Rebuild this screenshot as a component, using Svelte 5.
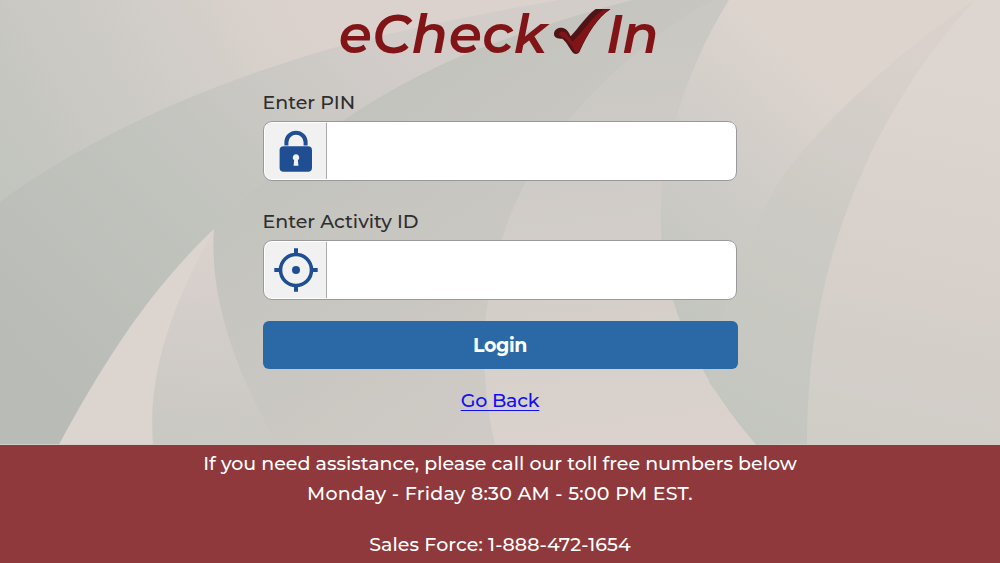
<script>
	let pin = '';
	let activityId = '';
</script>

<div class="page">
	<main class="login">
		<svg class="backdrop" viewBox="0 0 1000 445" preserveAspectRatio="none" aria-hidden="true">
			<defs>
				<linearGradient id="sky" gradientUnits="userSpaceOnUse" x1="0" y1="180" x2="300" y2="0">
					<stop offset="0" stop-color="#c2c4be" />
					<stop offset="0.6" stop-color="#d1cdc8" />
					<stop offset="1" stop-color="#dcd2cd" />
				</linearGradient>
				<linearGradient id="sweep" gradientUnits="userSpaceOnUse" x1="60" y1="400" x2="420" y2="50">
					<stop offset="0" stop-color="#b9bcb6" />
					<stop offset="0.45" stop-color="#c1c3bd" />
					<stop offset="1" stop-color="#d3cdca" />
				</linearGradient>
				<linearGradient id="inner" gradientUnits="userSpaceOnUse" x1="260" y1="150" x2="470" y2="440">
					<stop offset="0" stop-color="#c2c3bd" />
					<stop offset="1" stop-color="#cfcac5" />
				</linearGradient>
				<linearGradient id="petal" gradientUnits="userSpaceOnUse" x1="600" y1="50" x2="650" y2="440">
					<stop offset="0" stop-color="#cac8c3" />
					<stop offset="0.5" stop-color="#d2cdc8" />
					<stop offset="1" stop-color="#dbd2cd" />
				</linearGradient>
				<linearGradient id="leaf" gradientUnits="userSpaceOnUse" x1="670" y1="310" x2="850" y2="100">
					<stop offset="0" stop-color="#c3c5bf" />
					<stop offset="0.6" stop-color="#d1cdc8" />
					<stop offset="1" stop-color="#ddd4ce" />
				</linearGradient>
				<linearGradient id="blade" gradientUnits="userSpaceOnUse" x1="740" y1="440" x2="930" y2="40">
					<stop offset="0" stop-color="#c3c6bf" />
					<stop offset="0.5" stop-color="#cccac4" />
					<stop offset="1" stop-color="#dad1cc" />
				</linearGradient>
				<linearGradient id="edge" gradientUnits="userSpaceOnUse" x1="960" y1="80" x2="880" y2="440">
					<stop offset="0" stop-color="#ddd5cf" />
					<stop offset="0.5" stop-color="#d8d0cb" />
					<stop offset="1" stop-color="#d0cdc7" />
				</linearGradient>
				<linearGradient id="thorn" gradientUnits="userSpaceOnUse" x1="210" y1="240" x2="190" y2="440">
					<stop offset="0" stop-color="#dbd1cd" />
					<stop offset="0.45" stop-color="#d2cdc9" />
					<stop offset="1" stop-color="#cac8c2" />
				</linearGradient>
			</defs>
			<rect width="1000" height="445" fill="url(#sky)" />
			<path fill="url(#sweep)" d="M0 202C90 136 210 83 333 48C410 27 490 12 558 0H760V445H0Z" />
			<path fill="url(#inner)" d="M214 229C300 140 400 76 500 41C548 24 585 12 633 0H760V445H278C235 370 209 298 214 229Z" />
			<path fill="url(#petal)" d="M713 0C640 42 582 96 540 158C495 228 468 330 495 445H780V0Z" />
			<path fill="url(#leaf)" d="M729 0C690 62 663 142 661 205C657 290 693 372 756 445H1000V0Z" />
			<path fill="url(#blade)" d="M975 0C900 50 820 124 780 180C730 270 710 340 709 383L756 445H1000V0Z" />
			<path fill="url(#edge)" d="M975 0C865 120 806 275 807 445H1000V0Z" />
			<path fill="#dcd4ce" d="M214 229C150 290 105 360 59 445H160V360Z" />
			<path fill="url(#thorn)" d="M214 229C175 300 147 370 153 445H278C235 370 209 298 214 229Z" />
		</svg>

		<svg class="logo" viewBox="0 0 1020 195" role="img" aria-label="eCheck In">
			<text x="26" y="158" textLength="625">eCheck</text>
			<text x="828" y="158" textLength="158">In</text>
			<path
				fill="#4f1416"
				d="M672 101C673 88 686 82 699 84C710 86 717 98 722 109C745 85 772 43 797 27H842C803 52 771 105 750 152C746 164 733 165 727 156C716 139 706 122 697 116C683 116 671 112 672 101Z"
			/>
			<path
				fill="#801416"
				d="M686 104C690 92 704 91 711 103L727 125C757 99 789 46 821 29H839C800 53 770 105 748 151C745 160 738 160 734 153C724 135 711 116 699 112Z"
			/>
		</svg>

		<form class="form" on:submit|preventDefault>
			<label for="pin">Enter PIN</label>
			<div class="field">
				<span class="field__icon">
					<svg viewBox="0 0 44 44">
						<path d="M12.4 16.5v-3.2a9.6 9.6 0 0 1 19.2 0v3.2" fill="none" stroke="#1f4f92" stroke-width="4" />
						<rect x="5.6" y="17.3" width="32.4" height="25.4" rx="4" fill="#1f4f92" />
						<path d="M22 25.2a3.2 3.2 0 0 1 1.9 5.8l.5 5.7h-4.8l.5-5.7a3.2 3.2 0 0 1 1.9-5.8Z" fill="#f1f1f1" />
					</svg>
				</span>
				<input id="pin" type="text" bind:value={pin} />
			</div>

			<label for="activity">Enter Activity ID</label>
			<div class="field">
				<span class="field__icon">
					<svg viewBox="0 0 44 44">
						<circle cx="22" cy="22" r="15.5" fill="none" stroke="#1f4f92" stroke-width="3.6" />
						<path d="M22 .3v7M22 36.7v7M.3 22h7M36.7 22h7" stroke="#1f4f92" stroke-width="4" />
						<circle cx="22" cy="22" r="4" fill="#1f4f92" />
					</svg>
				</span>
				<input id="activity" type="text" bind:value={activityId} />
			</div>

			<button type="submit">Login</button>
			<a href="#back">Go Back</a>
		</form>
	</main>

	<footer>
		<p class="help">If you need assistance, please call our toll free numbers below</p>
		<p class="hours">Monday - Friday 8:30 AM - 5:00 PM EST.</p>
		<p class="phone">Sales Force: 1-888-472-1654</p>
	</footer>
</div>

<style>
	:global(body) {
		overflow: hidden;
	}

	.page {
		height: 563px;
		display: flex;
		flex-direction: column;
		font-family: Montserrat, Inter, sans-serif;
		font-size: 19px;
		font-weight: 500;
		color: #2e2e2e;
	}

	.login {
		position: relative;
		flex: 1;
		display: flex;
		flex-direction: column;
		align-items: center;
	}

	.backdrop {
		position: absolute;
		inset: 0;
		width: 100%;
		height: 100%;
		z-index: -1;
	}

	.logo {
		width: 340px;
		height: 65px;
		overflow: visible;
	}

	.logo text {
		font-size: 160px;
		font-weight: 600;
		font-style: italic;
		fill: #801416;
	}

	.form {
		width: 475px;
		display: flex;
		flex-direction: column;
	}

	label {
		height: 37px;
		margin: 19px 0 0;
		line-height: 37px;
	}

	.field {
		box-sizing: border-box;
		display: flex;
		height: 60px;
		margin: 0 1px 2.5px 0.5px;
		padding: 1px;
		border: 1px solid #999;
		border-radius: 9px;
		background: #fff;
		overflow: hidden;
	}

	.field__icon {
		box-sizing: border-box;
		width: 62px;
		display: flex;
		align-items: center;
		justify-content: center;
		border-right: 1px solid #aaa;
		border-radius: 7px 0 0 7px;
		background: #f1f1f1;
	}

	.field__icon svg {
		width: 44px;
		height: 44px;
	}

	input {
		flex: 1;
		min-width: 0;
		padding: 0 12px;
		border: 0;
		outline: none;
		background: #fff;
		font: inherit;
	}

	button {
		height: 47.5px;
		margin-top: 19px;
		padding-top: 3px;
		border: 0;
		border-radius: 6px;
		background: #2a69a6;
		color: #fff;
		font: inherit;
		font-weight: 700;
		letter-spacing: -0.4px;
	}

	a {
		align-self: center;
		margin-top: 20.5px;
		line-height: 24px;
		letter-spacing: -0.2px;
		color: #1010f0;
		text-underline-offset: 3px;
	}

	footer {
		box-sizing: border-box;
		height: 118.5px;
		padding-top: 4px;
		background: #8f393c;
		color: #fff;
		text-align: center;
	}

	p {
		margin: 0;
		line-height: 30px;
	}

	.hours {
		letter-spacing: 0.25px;
	}

	.phone {
		margin-top: 21px;
		letter-spacing: 0.08px;
	}
</style>
